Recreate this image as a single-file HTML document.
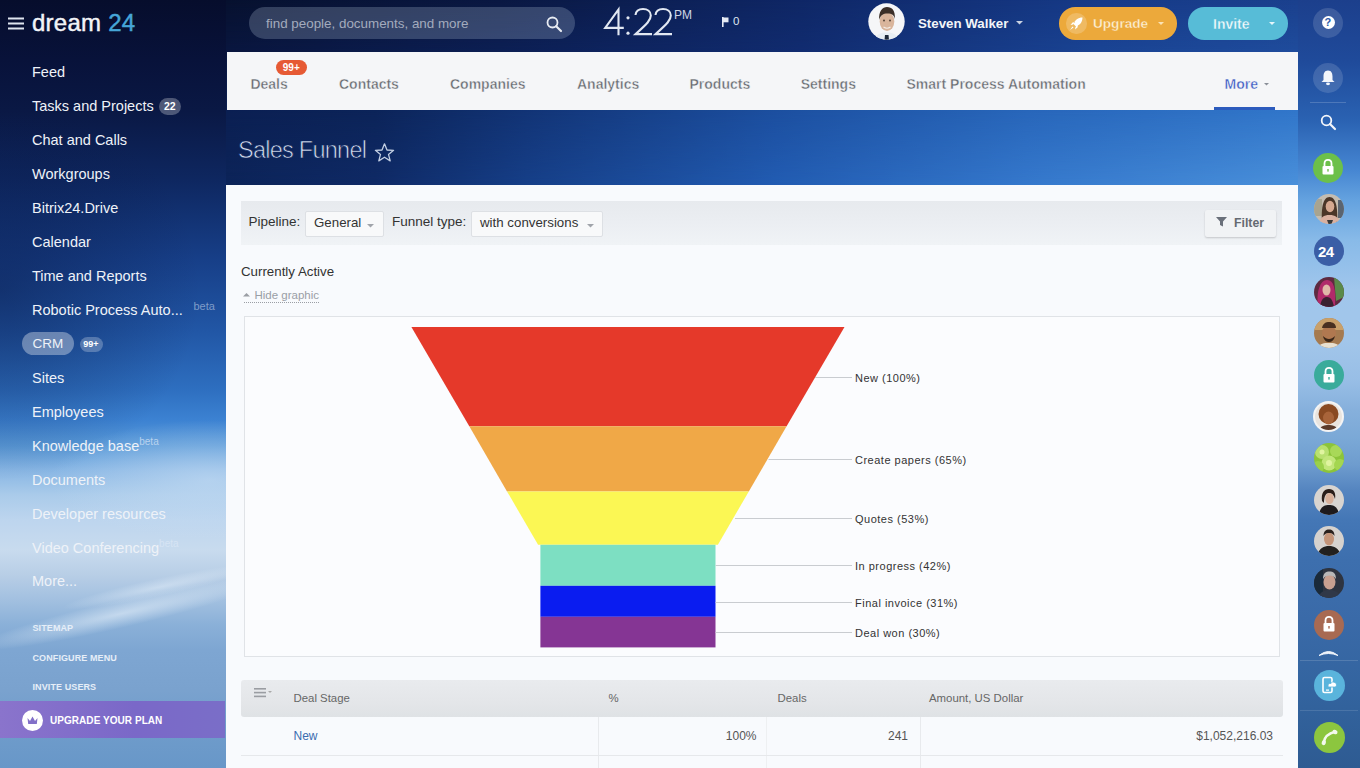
<!DOCTYPE html>
<html><head><meta charset="utf-8">
<style>
*{margin:0;padding:0;box-sizing:border-box}
html,body{width:1360px;height:768px;overflow:hidden}
body{position:relative;font-family:"Liberation Sans",sans-serif;background:#1b4a9a}
.a{position:absolute;line-height:1;white-space:nowrap}
#bg{position:absolute;left:0;top:0;width:226px;height:768px;
background:
 radial-gradient(ellipse 160px 60px at 210px 480px, rgba(200,222,244,.6), rgba(200,222,244,0)),
 radial-gradient(ellipse 200px 190px at 0px 290px, rgba(8,22,66,.45), rgba(8,22,66,0)),
 linear-gradient(180deg,#060d2c 0px,#08123a 60px,#0a1844 110px,#0e2760 180px,#173f88 260px,#2156a5 330px,#2e6fc0 390px,#3c82d2 420px,#5a9ad8 446px,#88b6e4 470px,#aacbea 495px,#bdd5ee 520px,#c8dbee 550px,#b8cee6 575px,#a2c0e0 600px,#8ab0d8 625px,#7ea6d2 650px,#7aa2ce 690px,#6f9ccb 730px,#6897c8 768px);}
#bgR{position:absolute;left:1298px;top:0;width:62px;height:768px;
background:linear-gradient(180deg,#1c3f8c 0px,#1f4a9a 60px,#2a62b2 120px,#4686d2 170px,#64a2df 200px,#88bae8 240px,#a0c6ec 290px,#a2c6ea 340px,#98bee6 380px,#86b0dc 410px,#7aa8d6 440px,#6e9cce 465px,#5585c0 490px,#4477b6 520px,#3d6fae 560px,#3a6aa8 620px,#33649f 690px,#2e5b92 768px);}
.tb{position:absolute;left:226px;top:0;width:1072px;height:185px}
#t0{background:linear-gradient(90deg,#07112f 0,#0a1842 274px,#0f2766 574px,#163a88 874px,#1b408e 1072px)}
#t1{background:linear-gradient(90deg,#09163f 0,#0c1f54 274px,#112c70 574px,#1a4494 874px,#1f4c9c 1072px);-webkit-mask-image:linear-gradient(180deg,transparent 0,#000 52px);mask-image:linear-gradient(180deg,transparent 0,#000 52px)}
#t2{background:linear-gradient(90deg,#0b1f52 0,#0c2459 150px,#123476 300px,#1c4fa0 550px,#2866ba 800px,#3176ca 1072px);-webkit-mask-image:linear-gradient(180deg,transparent 52px,#000 110px);mask-image:linear-gradient(180deg,transparent 52px,#000 110px)}
#t3{background:linear-gradient(90deg,#0c2459 0,#0f2a66 150px,#163f88 300px,#225cb2 550px,#3578cc 800px,#4a90da 1072px);-webkit-mask-image:linear-gradient(180deg,transparent 110px,#000 185px);mask-image:linear-gradient(180deg,transparent 110px,#000 185px)}
.menu{color:#eef2f8;font-size:14.5px}
.bot{color:#e6eef8;font-size:9px;font-weight:700;letter-spacing:.1px}
.nav{color:#65696f;font-size:14px;font-weight:700;-webkit-text-stroke:.4px #f5f6f8}
.circ{position:absolute;border-radius:50%}
.lbl{font-size:11px;color:#333;letter-spacing:.5px}
.ln{position:absolute;height:1px;background:#cdd0d4}
.th{font-size:11.4px;color:#666}
.td{font-size:12px;color:#555}
</style></head>
<body>
<div id="bg"></div>
<div class="a" style="left:-30px;top:596px;width:300px;height:36px;transform:rotate(-13deg);background:radial-gradient(ellipse 150px 14px at 150px 18px,rgba(235,244,252,.55),rgba(235,244,252,0))"></div>
<div class="a" style="left:60px;top:575px;width:200px;height:24px;transform:rotate(-12deg);background:radial-gradient(ellipse 100px 9px at 100px 12px,rgba(235,244,252,.45),rgba(235,244,252,0))"></div>
<div class="a" style="left:0;top:768px;width:226px;height:0"></div>
<div class="tb" id="t0"></div><div class="tb" id="t1"></div><div class="tb" id="t2"></div><div class="tb" id="t3"></div>
<div id="bgR"></div>

<!-- ===== top bar ===== -->
<svg class="a" style="left:8px;top:17px" width="16" height="13"><rect x="0" y="0.5" width="16" height="2" fill="#dfe5ef"/><rect x="0" y="5.5" width="16" height="2" fill="#dfe5ef"/><rect x="0" y="10.5" width="16" height="2" fill="#dfe5ef"/></svg>
<div class="a" style="left:32px;top:11.4px;font-size:24px;color:#f2f4f8;-webkit-text-stroke:.45px #f2f4f8;letter-spacing:.25px">dream <span style="color:#46a6d8;-webkit-text-stroke:.45px #46a6d8">24</span></div>

<div class="a" style="left:249px;top:7px;width:326px;height:32px;border-radius:16px;background:rgba(200,215,235,.23)"></div>
<div class="a" style="left:266px;top:16.9px;font-size:13.4px;color:#a3abbd">find people, documents, and more</div>
<svg class="a" style="left:546px;top:16px" width="17" height="17"><circle cx="6.5" cy="6.5" r="5" fill="none" stroke="#e8ecf3" stroke-width="1.8"/><line x1="10.2" y1="10.2" x2="15" y2="15" stroke="#e8ecf3" stroke-width="2.2" stroke-linecap="round"/></svg>

<!-- clock -->
<svg class="a" style="left:600px;top:5px" width="100" height="35">
 <g fill="none" stroke="#e2e8f2" stroke-width="2.1" stroke-linejoin="miter">
  <path d="M18.5 30.2 V4.4 L5.2 22.9 H23.8"/>
  <path d="M35.5 10 C36 5.8 39 4 43 4 C47.5 4 50.8 6.6 50.8 10.6 C50.8 15 47.5 18.5 35.6 29.1 H52"/>
  <path d="M55.5 10 C56 5.8 59 4 63 4 C67.5 4 70.8 6.6 70.8 10.6 C70.8 15 67.5 18.5 55.6 29.1 H72"/>
 </g>
 <circle cx="28" cy="12.8" r="1.6" fill="#e2e8f2"/><circle cx="28" cy="28.2" r="1.6" fill="#e2e8f2"/>
</svg>
<div class="a" style="left:674px;top:9px;font-size:12px;color:#cfd6e4">PM</div>
<svg class="a" style="left:722px;top:17px" width="7" height="10"><path d="M0.8 0 V10" stroke="#e6ebf4" stroke-width="1.6"/><rect x="1" y="0.5" width="5.5" height="4.8" fill="#e6ebf4"/></svg>
<div class="a" style="left:733px;top:16px;font-size:11.5px;color:#dfe5ef">0</div>

<!-- avatar -->
<svg class="a" style="left:867.5px;top:3px" width="37" height="37" viewBox="0 0 37 37">
 <defs><clipPath id="cav"><circle cx="18.5" cy="18.5" r="18.2"/></clipPath></defs>
 <g clip-path="url(#cav)">
  <rect width="37" height="37" fill="#f5f6f8"/>
  <path d="M6 37 C8 31 13 29.5 18.5 29.5 C24 29.5 29 31 31 37Z" fill="#e8eef3"/>
  <path d="M17 32 L20.5 32 L21 37 L16.5 37Z" fill="#1e2838"/>
  <ellipse cx="19" cy="18.5" rx="7.3" ry="9.5" fill="#d9b59c"/>
  <path d="M11.2 17 C10.5 8 14.5 4 19 4 C24 4 27.5 7.5 26.8 16 C26 12 24 10.5 19.5 10.5 C15 10.5 12.5 12 11.2 17Z" fill="#3b2f28"/>
  <path d="M15.5 24 Q19 26.5 22.5 24" stroke="#f4ece6" stroke-width="1.2" fill="none"/>
  <circle cx="16" cy="17.5" r=".9" fill="#4a3a30"/><circle cx="22" cy="17.5" r=".9" fill="#4a3a30"/>
 </g>
</svg>
<div class="a" style="left:918px;top:16.6px;font-size:13.3px;font-weight:700;color:#f2f4f8">Steven Walker</div>
<svg class="a" style="left:1016px;top:21px" width="7" height="4"><path d="M0 0 H7 L3.5 3.5Z" fill="#c9d2e2"/></svg>

<!-- upgrade -->
<div class="a" style="left:1058.5px;top:7px;width:118.5px;height:32.5px;border-radius:16.25px;background:#eca93b"></div>
<div class="circ" style="left:1066px;top:13px;width:20.5px;height:20.5px;background:rgba(255,255,255,.2)"></div>
<svg class="a" style="left:1069px;top:16px" width="15" height="15" viewBox="0 0 15 15"><path d="M13.5 1.5 C9 1.5 6 4 4.5 8 L7 10.5 C11 9 13.5 6 13.5 1.5Z M4 8.5 L1.5 9 L3.5 6.5 L6 6 Z M6.5 11 L6 13.5 L8.5 11.5 L9 9Z M3.5 10.5 L1 14 L4.5 11.5Z" fill="#fff"/></svg>
<div class="a" style="left:1093px;top:17.3px;font-size:13.6px;font-weight:700;color:#fdf1d6;-webkit-text-stroke:.35px #eca93b">Upgrade</div>
<svg class="a" style="left:1157.5px;top:22px" width="6" height="4"><path d="M0 0 H6 L3 3Z" fill="#fbe3b5"/></svg>

<div class="a" style="left:1188px;top:7px;width:100px;height:32.5px;border-radius:16.25px;background:#57bcd7"></div>
<div class="a" style="left:1213px;top:17.3px;font-size:14px;font-weight:700;color:#f4fbfd;-webkit-text-stroke:.35px #57bcd7">Invite</div>
<svg class="a" style="left:1269px;top:22px" width="6" height="4"><path d="M0 0 H6 L3 3Z" fill="#e6f6fb"/></svg>

<!-- ===== left menu ===== -->
<div class="a menu" style="left:32px;top:65px">Feed</div>
<div class="a menu" style="left:32px;top:99px">Tasks and Projects</div>
<div class="a" style="left:159px;top:98px;width:21.5px;height:17px;border-radius:8.5px;background:rgba(255,255,255,.28);color:#fff;font-size:10.5px;font-weight:700;text-align:center;line-height:17px">22</div>
<div class="a menu" style="left:32px;top:133px">Chat and Calls</div>
<div class="a menu" style="left:32px;top:167px">Workgroups</div>
<div class="a menu" style="left:32px;top:201px">Bitrix24.Drive</div>
<div class="a menu" style="left:32px;top:235px">Calendar</div>
<div class="a menu" style="left:32px;top:269px">Time and Reports</div>
<div class="a menu" style="left:32px;top:303px">Robotic Process Auto...</div>
<div class="a" style="left:193.5px;top:301px;font-size:11px;color:#7f9cc8">beta</div>
<div class="a" style="left:22px;top:332px;width:51.5px;height:23px;border-radius:11.5px;background:rgba(255,255,255,.35)"></div>
<div class="a menu" style="left:32.5px;top:336.5px;font-size:13.5px">CRM</div>
<div class="a" style="left:79.5px;top:336.5px;width:23px;height:15.5px;border-radius:8px;background:rgba(255,255,255,.25);color:#fff;font-size:9px;font-weight:700;text-align:center;line-height:15.5px">99+</div>
<div class="a menu" style="left:32px;top:371px">Sites</div>
<div class="a menu" style="left:32px;top:405px">Employees</div>
<div class="a menu" style="left:32px;top:439px">Knowledge base<span style="font-size:10px;color:#b9d2ee;position:relative;top:-6px">beta</span></div>
<div class="a menu" style="left:32px;top:473px">Documents</div>
<div class="a menu" style="left:32px;top:507px">Developer resources</div>
<div class="a menu" style="left:32px;top:541px">Video Conferencing<span style="font-size:10px;color:#d6e4f4;position:relative;top:-6px">beta</span></div>
<div class="a menu" style="left:32px;top:574px">More...</div>

<div class="a bot" style="left:32.5px;top:624px">SITEMAP</div>
<div class="a bot" style="left:32.5px;top:653.5px">CONFIGURE MENU</div>
<div class="a bot" style="left:32.5px;top:683px">INVITE USERS</div>

<div class="a" style="left:0;top:701px;width:225px;height:37px;background:linear-gradient(90deg,#8a74cc,#7a68c8 60%,#7a6ec8)"></div>
<div class="circ" style="left:21.5px;top:709.5px;width:21px;height:21px;background:#fff"></div>
<svg class="a" style="left:25.5px;top:713.5px" width="13" height="13" viewBox="0 0 13 13"><path d="M1.5 4 L4 7 L6.5 2.5 L9 7 L11.5 4 L10.8 10 H2.2Z" fill="#8270c8"/></svg>
<div class="a" style="left:50px;top:716px;font-size:10px;font-weight:700;color:#fff;letter-spacing:.05px">UPGRADE YOUR PLAN</div>

<!-- ===== nav panel ===== -->
<div class="a" style="left:226.5px;top:52px;width:1071px;height:57.5px;background:#f5f6f8"></div>
<div class="a nav" style="left:250.4px;top:76.6px">Deals</div>
<div class="a" style="left:276px;top:60px;width:30.5px;height:15px;border-radius:7.5px;background:#e65a34;color:#fff;font-size:10px;font-weight:700;text-align:center;line-height:15px">99+</div>
<div class="a nav" style="left:339px;top:76.6px">Contacts</div>
<div class="a nav" style="left:450px;top:76.6px">Companies</div>
<div class="a nav" style="left:577px;top:76.6px">Analytics</div>
<div class="a nav" style="left:689.5px;top:76.6px">Products</div>
<div class="a nav" style="left:800.7px;top:76.6px">Settings</div>
<div class="a nav" style="left:906.5px;top:76.6px">Smart Process Automation</div>
<div class="a nav" style="left:1224.5px;top:76.6px;color:#3a5ac2">More</div>
<svg class="a" style="left:1264px;top:83px" width="5" height="3"><path d="M0 0 H5 L2.5 2.5Z" fill="#8a8f98"/></svg>
<div class="a" style="left:1213.5px;top:107px;width:61px;height:3px;background:#2c5bbd"></div>

<!-- title -->
<div class="a" style="left:238px;top:139px;font-size:23.5px;color:#d6e0f0;letter-spacing:-.75px;-webkit-text-stroke:.7px #0e265e">Sales Funnel</div>
<svg class="a" style="left:374px;top:142px" width="21" height="21" viewBox="0 0 21 21"><path d="M10.5 1.8 L13 8 L19.6 8.3 L14.5 12.4 L16.2 18.9 L10.5 15.2 L4.8 18.9 L6.5 12.4 L1.4 8.3 L8 8Z" fill="none" stroke="#c3cfe3" stroke-width="1.3" stroke-linejoin="round"/></svg>

<!-- ===== content panel ===== -->
<div class="a" style="left:226px;top:185px;width:1072px;height:583px;background:#f8fafd"></div>
<div class="a" style="left:240.5px;top:201px;width:1041.5px;height:44px;background:linear-gradient(180deg,#e7eaee 0%,#ebeef2 50%,#f0f3f6 100%)"></div>
<div class="a" style="left:248.5px;top:215.3px;font-size:13.5px;color:#333">Pipeline:</div>
<div class="a" style="left:305px;top:210.7px;width:79px;height:26px;background:#f8f9fa;border:1px solid #dde0e4;border-radius:2px"></div>
<div class="a" style="left:314px;top:216.3px;font-size:13.3px;color:#333">General</div>
<svg class="a" style="left:367px;top:224px" width="7" height="4"><path d="M0 0 H7 L3.5 3.5Z" fill="#a0a4aa"/></svg>
<div class="a" style="left:392px;top:215.3px;font-size:13.5px;color:#333">Funnel type:</div>
<div class="a" style="left:471px;top:210.7px;width:132px;height:26px;background:#f8f9fa;border:1px solid #dde0e4;border-radius:2px"></div>
<div class="a" style="left:480px;top:216.3px;font-size:13.3px;color:#333">with conversions</div>
<svg class="a" style="left:586.5px;top:224px" width="7" height="4"><path d="M0 0 H7 L3.5 3.5Z" fill="#a0a4aa"/></svg>

<div class="a" style="left:1205px;top:209.8px;width:70.7px;height:27.6px;background:#f1f3f5;border-radius:2px;box-shadow:0 1px 2px rgba(0,0,0,.18)"></div>
<svg class="a" style="left:1216px;top:217px" width="11" height="10"><path d="M0 0 H11 L7 4.5 V9.5 L4 8 V4.5Z" fill="#6a707a"/></svg>
<div class="a" style="left:1234px;top:217px;font-size:12.3px;font-weight:700;color:#656a72">Filter</div>

<div class="a" style="left:241px;top:265px;font-size:13.3px;color:#333">Currently Active</div>
<svg class="a" style="left:243px;top:293px" width="7" height="4"><path d="M0 3.5 H7 L3.5 0Z" fill="#9a9ea4"/></svg>
<div class="a" style="left:254.5px;top:290px;font-size:11.5px;color:#9a9ea6">Hide graphic</div>
<div class="a" style="left:244px;top:302px;width:75px;height:0;border-top:1px dotted #9a9ea4"></div>

<!-- chart -->
<div class="a" style="left:243.8px;top:316px;width:1036.5px;height:341px;background:#fbfcfe;border:1px solid #e0e3e7"></div>
<svg class="a" style="left:0;top:0" width="1360" height="768">
 <polygon points="411.4,326.9 844.5,326.9 786.6,426.3 469.3,426.3" fill="#e5392a"/>
 <polygon points="469.3,426.3 786.6,426.3 748.8,491.4 507,491.4" fill="#f0a847"/>
 <polygon points="507,491.4 748.8,491.4 717.9,544.8 538.1,544.8" fill="#fbf754"/>
 <rect x="540.4" y="544.8" width="175.1" height="41" fill="#7ddfc2"/>
 <rect x="540.4" y="585.8" width="175.1" height="31" fill="#0a1cf0"/>
 <rect x="540.4" y="616.8" width="175.1" height="30.6" fill="#853594"/>
 <g stroke="#c9ccd0" stroke-width="1">
  <line x1="815" y1="377.5" x2="852" y2="377.5"/>
  <line x1="768.5" y1="459.5" x2="852" y2="459.5"/>
  <line x1="735" y1="518.5" x2="852" y2="518.5"/>
  <line x1="715.5" y1="565.5" x2="852" y2="565.5"/>
  <line x1="715.5" y1="602.5" x2="852" y2="602.5"/>
  <line x1="715.5" y1="632.5" x2="852" y2="632.5"/>
 </g>
</svg>
<div class="a lbl" style="left:855px;top:372.5px">New (100%)</div>
<div class="a lbl" style="left:855px;top:455px">Create papers (65%)</div>
<div class="a lbl" style="left:855px;top:514px">Quotes (53%)</div>
<div class="a lbl" style="left:855px;top:561px">In progress (42%)</div>
<div class="a lbl" style="left:855px;top:597.5px">Final invoice (31%)</div>
<div class="a lbl" style="left:855px;top:627.5px">Deal won (30%)</div>

<!-- table -->
<div class="a" style="left:241px;top:679.5px;width:1042px;height:37px;background:linear-gradient(180deg,#e9ebee,#e4e6e9 60%,#dfe2e5);border-radius:3px"></div>
<svg class="a" style="left:253.5px;top:688px" width="18" height="10"><rect x="0" y="0" width="12" height="1.6" fill="#9a9da2"/><rect x="0" y="3.8" width="12" height="1.6" fill="#9a9da2"/><rect x="0" y="7.6" width="12" height="1.6" fill="#9a9da2"/><path d="M14 3 H18 L16 5Z" fill="#aaa"/></svg>
<div class="a th" style="left:293.5px;top:692.5px">Deal Stage</div>
<div class="a th" style="left:608.5px;top:692.5px">%</div>
<div class="a th" style="left:777.5px;top:692.5px">Deals</div>
<div class="a th" style="left:929px;top:692.5px">Amount, US Dollar</div>
<div class="a" style="left:597.5px;top:716.5px;width:1px;height:52px;background:#e8eaed"></div>
<div class="a" style="left:766px;top:716.5px;width:1px;height:52px;background:#eef0f2"></div>
<div class="a" style="left:919.5px;top:716.5px;width:1px;height:52px;background:#e8eaed"></div>
<div class="a" style="left:241px;top:754.5px;width:1042px;height:1px;background:#e6e8eb"></div>
<div class="a td" style="left:293.5px;top:729.5px;color:#3b6cb0">New</div>
<div class="a td" style="left:0;width:756.5px;text-align:right;top:729.5px">100%</div>
<div class="a td" style="left:0;width:908px;text-align:right;top:729.5px">241</div>
<div class="a td" style="left:0;width:1273px;text-align:right;top:729.5px">$1,052,216.03</div>

<!-- ===== right sidebar ===== -->
<div class="circ" style="left:1313px;top:7.5px;width:30px;height:30px;background:rgba(255,255,255,.14)"></div>
<div class="circ" style="left:1321.5px;top:16px;width:13px;height:13px;background:#fff"></div>
<div class="a" style="left:1324.5px;top:17.3px;font-size:11px;font-weight:700;color:#2a5aa8">?</div>
<div class="circ" style="left:1313px;top:62.5px;width:30px;height:30px;background:rgba(255,255,255,.14)"></div>
<svg class="a" style="left:1320px;top:69px" width="16" height="17" viewBox="0 0 16 17"><path d="M8 1.5 C11.5 1.5 12.5 4.5 12.5 7.5 V11 L14.5 13 H1.5 L3.5 11 V7.5 C3.5 4.5 4.5 1.5 8 1.5Z" fill="#f3f6fb"/><ellipse cx="8" cy="14.8" rx="2" ry="1.4" fill="#f3f6fb"/></svg>
<div class="a" style="left:1310px;top:102px;width:36px;height:1px;background:rgba(255,255,255,.18)"></div>
<svg class="a" style="left:1320px;top:114px" width="17" height="17"><circle cx="6.5" cy="6.5" r="4.8" fill="none" stroke="#f3f6fb" stroke-width="1.8"/><line x1="10" y1="10" x2="15" y2="15" stroke="#f3f6fb" stroke-width="2.2" stroke-linecap="round"/></svg>

<div class="circ" style="left:1313px;top:152.5px;width:30px;height:30px;background:#6cc04a"></div>
<svg class="a" style="left:1320px;top:158px" width="16" height="18" viewBox="0 0 16 18"><path d="M4.5 8 V5.5 C4.5 3 6 1.8 8 1.8 C10 1.8 11.5 3 11.5 5.5 V8" fill="none" stroke="#fff" stroke-width="1.8"/><rect x="2.5" y="8" width="11" height="8.5" rx="1" fill="#fff"/><rect x="7.3" y="11" width="1.4" height="2.6" fill="#6cc04a"/></svg>

<!-- avatar 1 -->
<svg class="a" style="left:1313.5px;top:193.5px" width="30" height="30" viewBox="0 0 30 30"><defs><clipPath id="c1"><circle cx="15" cy="15" r="15"/></clipPath></defs><g clip-path="url(#c1)"><rect width="30" height="30" fill="#c4bcb0"/><path d="M0 5 H8 V22 H0Z" fill="#a8a490"/><path d="M24 6 H30 V24 H24Z" fill="#5a6470"/><path d="M8 28 C7 14 9 3 15.5 3 C22 3 24 14 23 28Z" fill="#4a3628"/><ellipse cx="16" cy="12.5" rx="4.3" ry="5.8" fill="#d4a890"/><path d="M5 30 C6 23 10 21 15.5 21 C21 21 25 23 26 30Z" fill="#d8b0a0"/><path d="M13 26 L19 26 L17.5 30 L14.5 30Z" fill="#3a3a3a"/></g></svg>
<div class="circ" style="left:1313.5px;top:236px;width:30px;height:30px;background:#3b5ea6"></div>
<div class="a" style="left:1318px;top:243.5px;font-size:15px;font-weight:700;color:#fff;letter-spacing:-.6px">24</div>
<!-- avatar 3 -->
<svg class="a" style="left:1313.5px;top:276.5px" width="30" height="30" viewBox="0 0 30 30"><defs><clipPath id="c3"><circle cx="15" cy="15" r="15"/></clipPath></defs><g clip-path="url(#c3)"><rect width="30" height="30" fill="#5e2a40"/><path d="M20 0 H30 V20 L22 24Z" fill="#5a8a4a"/><path d="M4 30 C2 15 6 3 13 3 C20 3 22 12 21 30Z" fill="#b02a6a"/><ellipse cx="12.5" cy="13" rx="4" ry="5.5" fill="#e0b8a8"/><path d="M6 30 C7 22 10 20 13 20 C17 20 19 24 20 30Z" fill="#3a2030"/></g></svg>
<!-- avatar 4 -->
<svg class="a" style="left:1313.5px;top:318px" width="30" height="30" viewBox="0 0 30 30"><defs><clipPath id="c4"><circle cx="15" cy="15" r="15"/></clipPath></defs><g clip-path="url(#c4)"><rect width="30" height="30" fill="#a57a50"/><path d="M0 0 H30 V12 H0Z" fill="#c9a06a"/><ellipse cx="15" cy="15" rx="7" ry="8" fill="#b07850"/><path d="M8 10 C9 5 12 4 15 4 C19 4 22 6 22 10 Z" fill="#4a3020"/><path d="M9 18 C10 23 13 24 15 24 C18 24 20 22 21 18 C19 20 17 21 15 21 C13 21 11 20 9 18Z" fill="#3a2618"/><path d="M4 30 C6 25 10 25 15 25 C20 25 24 25 26 30Z" fill="#e8e0d0"/></g></svg>
<div class="circ" style="left:1313.5px;top:360px;width:30px;height:30px;background:#3aab9b"></div>
<svg class="a" style="left:1320.5px;top:365.5px" width="16" height="18" viewBox="0 0 16 18"><path d="M4.5 8 V5.5 C4.5 3 6 1.8 8 1.8 C10 1.8 11.5 3 11.5 5.5 V8" fill="none" stroke="#fff" stroke-width="1.8"/><rect x="2.5" y="8" width="11" height="8.5" rx="1" fill="#fff"/><rect x="7.3" y="11" width="1.4" height="2.6" fill="#3aab9b"/></svg>
<!-- avatar 6 -->
<svg class="a" style="left:1313px;top:401px" width="31" height="31" viewBox="0 0 31 31"><defs><clipPath id="c6"><circle cx="15.5" cy="15.5" r="13.5"/></clipPath></defs><circle cx="15.5" cy="15.5" r="15.5" fill="#f4f4f4"/><g clip-path="url(#c6)"><rect width="31" height="31" fill="#e9e4de"/><circle cx="15.5" cy="13" r="10" fill="#8a4a22"/><ellipse cx="15.5" cy="17" rx="5.5" ry="6.5" fill="#a8643a"/><path d="M5 31 C7 25 11 24 15.5 24 C20 24 24 25 26 31Z" fill="#5a3a2a"/></g></svg>
<!-- lime -->
<svg class="a" style="left:1313.5px;top:443px" width="30" height="30" viewBox="0 0 30 30"><defs><clipPath id="c7"><circle cx="15" cy="15" r="15"/></clipPath></defs><g clip-path="url(#c7)"><rect width="30" height="30" fill="#8cc43a"/><circle cx="8" cy="9" r="7" fill="#b8e070"/><circle cx="22" cy="8" r="6" fill="#a8d858"/><circle cx="15" cy="20" r="7.5" fill="#c2e67a"/><circle cx="4" cy="24" r="6" fill="#9ad04a"/><circle cx="26" cy="22" r="6" fill="#a4d650"/><circle cx="15" cy="20" r="3" fill="#e0f4a0"/><circle cx="8" cy="9" r="2.5" fill="#e0f4a0"/></g></svg>
<!-- avatar 8 -->
<svg class="a" style="left:1313.5px;top:485px" width="30" height="30" viewBox="0 0 30 30"><defs><clipPath id="c8"><circle cx="15" cy="15" r="15"/></clipPath></defs><g clip-path="url(#c8)"><rect width="30" height="30" fill="#d8d4d0"/><path d="M8 16 C7 8 10 4 15 4 C20 4 22 8 21 14 C20 10 18 8 15 8 C12 8 10 11 10 18Z" fill="#2a1e1a"/><ellipse cx="15.5" cy="13.5" rx="4.2" ry="5.5" fill="#d8b09a"/><path d="M5 30 C6 22 10 20 15 20 C20 20 24 22 25 30Z" fill="#1e1a1c"/></g></svg>
<!-- avatar 9 -->
<svg class="a" style="left:1313.5px;top:526px" width="30" height="30" viewBox="0 0 30 30"><defs><clipPath id="c9"><circle cx="15" cy="15" r="15"/></clipPath></defs><g clip-path="url(#c9)"><rect width="30" height="30" fill="#d6d2ce"/><ellipse cx="15" cy="13" rx="5" ry="6.5" fill="#c49478"/><path d="M9.5 10 C9.5 5 12 3.5 15 3.5 C18 3.5 20.5 5 20.5 10 C19 7.5 17 7 15 7 C13 7 11 7.5 9.5 10Z" fill="#2a201c"/><path d="M3 30 C5 22 10 20 15 20 C20 20 25 22 27 30Z" fill="#22201e"/></g></svg>
<!-- avatar 10 -->
<svg class="a" style="left:1313.5px;top:568px" width="30" height="30" viewBox="0 0 30 30"><defs><clipPath id="c10"><circle cx="15" cy="15" r="15"/></clipPath></defs><g clip-path="url(#c10)"><rect width="30" height="30" fill="#2e3440"/><path d="M0 0 H9 V30 H0Z" fill="#1a2a3a"/><ellipse cx="15.5" cy="14" rx="6" ry="7.5" fill="#c8a090"/><path d="M9 11 C9 5 12 3.5 15.5 3.5 C19 3.5 22 5 22 11 C20 8 18 7.5 15.5 7.5 C13 7.5 11 8 9 11Z" fill="#b8b8b8"/><path d="M4 30 C6 24 10 22 15.5 22 C21 22 25 24 27 30Z" fill="#303848"/></g></svg>
<div class="circ" style="left:1313.5px;top:609.5px;width:30px;height:30px;background:#a86a52"></div>
<svg class="a" style="left:1320.5px;top:615px" width="16" height="18" viewBox="0 0 16 18"><path d="M4.5 8 V5.5 C4.5 3 6 1.8 8 1.8 C10 1.8 11.5 3 11.5 5.5 V8" fill="none" stroke="#fff" stroke-width="1.8"/><rect x="2.5" y="8" width="11" height="8.5" rx="1" fill="#fff"/><rect x="7.3" y="11" width="1.4" height="2.6" fill="#a86a52"/></svg>
<svg class="a" style="left:1318px;top:649px" width="21" height="8"><path d="M1 6.5 Q10.5 -1.5 20 6.5 Q10.5 2.5 1 6.5Z" fill="#eef3fa" stroke="#eef3fa" stroke-width="1" stroke-linejoin="round"/></svg>
<div class="a" style="left:1300px;top:660px;width:58px;height:1px;background:rgba(255,255,255,.15)"></div>
<div class="circ" style="left:1313.5px;top:670px;width:31px;height:31px;background:#5ab4dc"></div>
<svg class="a" style="left:1320px;top:676px" width="18" height="18" viewBox="0 0 18 18"><rect x="3" y="1.5" width="9" height="15" rx="1.5" fill="none" stroke="#fff" stroke-width="1.6"/><path d="M8 10 C8 8 9.5 7 11 7.5 C11.5 6 13 5.5 14.5 6.5 C15.5 6.5 16.5 7.5 16.5 9 C16.5 10.5 15.5 11 14.5 11 H9 C8.5 11 8 10.7 8 10Z" fill="#fff" stroke="#5ab4dc" stroke-width=".8"/><rect x="6" y="13.5" width="3" height="1.2" fill="#fff"/></svg>
<div class="circ" style="left:1313.5px;top:721.5px;width:31px;height:31px;background:#8cc63f"></div>
<svg class="a" style="left:1318px;top:726px" width="22" height="22" viewBox="0 0 22 22"><path d="M5.6 16.8 Q6.8 8.2 17.2 5.8" fill="none" stroke="#f4f9ee" stroke-width="2.6" stroke-linecap="round"/><ellipse cx="5.8" cy="16.6" rx="2.1" ry="2.6" transform="rotate(20 5.8 16.6)" fill="#f4f9ee"/><ellipse cx="17" cy="6" rx="2.6" ry="2.1" transform="rotate(20 17 6)" fill="#f4f9ee"/></svg>
<div class="a" style="left:1300px;top:709.5px;width:58px;height:1px;background:rgba(255,255,255,.12)"></div>

</body></html>
